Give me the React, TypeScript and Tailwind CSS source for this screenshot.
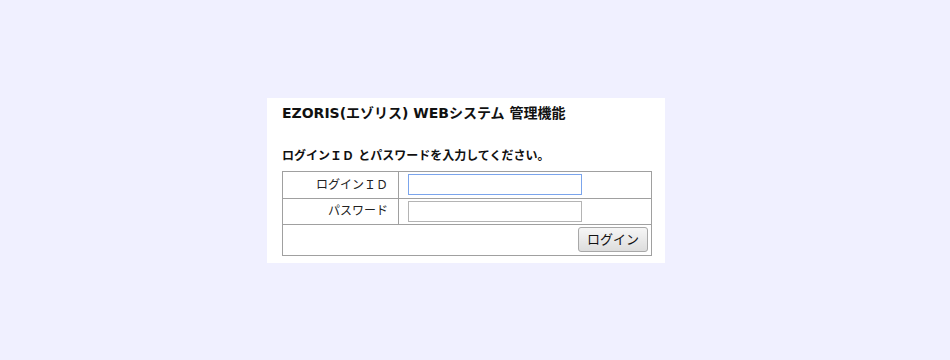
export default function App() {
  return (
    <div
      className="flex h-[360px] w-full items-center justify-center bg-[#f0f0ff] pr-[18px]"
      style={{ fontFamily: '"DejaVu Sans", "Noto Sans CJK JP", sans-serif' }}
    >
      <div className="flex h-[165px] w-[398px] flex-col bg-white pl-[15px] pr-[13px]">
        <h1 className="mt-[6px] h-[19px] text-[14px] font-bold leading-[19px] text-[#111]">
          EZORIS(エゾリス) WEBシステム 管理機能
        </h1>
        <p className="mt-[24px] h-[18px] text-[12px] font-bold leading-[18px] text-[#111]">
          ログインＩＤ とパスワードを入力してください。
        </p>
        <table className="mt-[6px] w-[370px] border-collapse border border-[#a0a0a0] text-[12px] text-[#222]">
          <tbody>
            <tr className="h-[27px]">
              <td className="w-[116px] border border-[#a0a0a0] pr-[10px] text-right">ログインＩＤ</td>
              <td className="border border-[#a0a0a0] pl-[9px]">
                <input
                  type="text"
                  className="block h-[21px] w-[174px] border border-[#7ba5ec] bg-white px-1 outline-none"
                />
              </td>
            </tr>
            <tr className="h-[26px]">
              <td className="border border-[#a0a0a0] pr-[10px] text-right">パスワード</td>
              <td className="border border-[#a0a0a0] pl-[9px]">
                <input
                  type="password"
                  className="block h-[21px] w-[174px] border border-[#b4b4b4] bg-white px-1 outline-none"
                />
              </td>
            </tr>
            <tr className="h-[31px]">
              <td colSpan={2} className="border border-[#a0a0a0] pr-[3px] text-right">
                <button className="h-[25px] w-[70px] rounded-[3px] border border-[#a8a8a8] bg-gradient-to-b from-[#f6f6f6] to-[#dddddd] text-[13px] text-[#111]">
                  ログイン
                </button>
              </td>
            </tr>
          </tbody>
        </table>
      </div>
    </div>
  );
}
